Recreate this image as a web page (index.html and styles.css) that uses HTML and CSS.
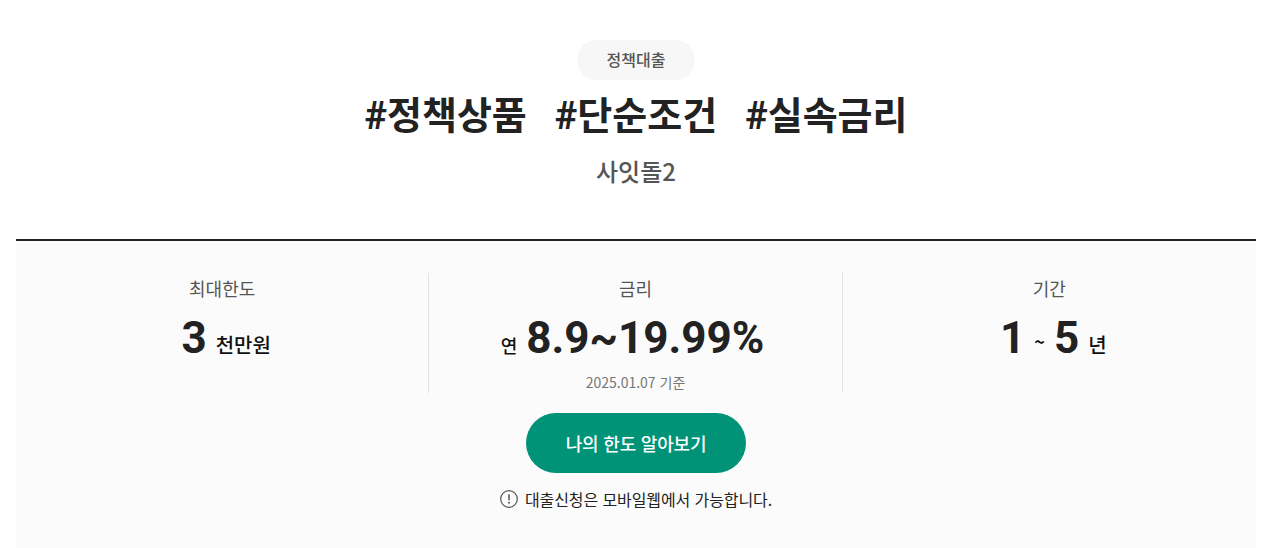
FILE: index.html
```html
<!DOCTYPE html>
<html lang="ko">
<head>
    <meta charset="UTF-8">
    <title>사잇돌2</title>
    <link rel="stylesheet" href="styles.css">
</head>
<body>
    <div class="container">
        <div class="head">
            <span class="badge">정책대출</span>
            <h1 class="tags"><span>#정책상품</span><span>#단순조건</span><span>#실속금리</span></h1>
            <p class="name">사잇돌2</p>
        </div>

        <div class="panel">
            <div class="stats">
                <div class="stat">
                    <div class="label">최대한도</div>
                    <div class="value"><strong>3</strong><em>천만원</em></div>
                </div>
                <div class="stat">
                    <div class="label">금리</div>
                    <div class="value rate"><em class="before">연</em><strong>8.9~19.99%</strong></div>
                    <div class="note">2025.01.07 기준</div>
                </div>
                <div class="stat">
                    <div class="label">기간</div>
                    <div class="value"><strong>1</strong><em class="tilde">~</em><strong>5</strong><em>년</em></div>
                </div>
            </div>

            <a class="apply" href="#">나의 한도 알아보기</a>

            <p class="notice">
                <svg class="notice-icon" width="18" height="18" viewBox="0 0 18 18">
                    <circle cx="9" cy="9" r="8.3" fill="none" stroke="#555" stroke-width="1.2"/>
                    <path d="M9 4.2v6" stroke="#555" stroke-width="1.5" fill="none"/>
                    <circle cx="9" cy="12.8" r="1" fill="#555"/>
                </svg>
                대출신청은 모바일웹에서 가능합니다.
            </p>
        </div>
    </div>
</body>
</html>
```

FILE: styles.css
```css
* {
    margin: 0;
    padding: 0;
    box-sizing: border-box;
}

body {
    font-family: "Noto Sans CJK KR", "Noto Sans", sans-serif;
    background-color: #fff;
    color: #222;
}

.container {
    padding: 40px 18px 0 16px;
    height: 548px;
    overflow: hidden;
}

.head {
    display: flex;
    flex-direction: column;
    align-items: center;
    height: 199px;
}

.badge {
    width: 118px;
    height: 40px;
    line-height: 38px;
    text-align: center;
    border-radius: 20px;
    background-color: #f7f7f7;
    color: #555;
    font-size: 16px;
    font-weight: 500;
}

.tags {
    display: flex;
    gap: 28px;
    margin-top: 9px;
    font-family: Roboto, "Noto Sans CJK KR", sans-serif;
    font-size: 38px;
    line-height: 54px;
    font-weight: 700;
}

.name {
    margin-top: 11px;
    font-family: "Noto Sans CJK KR", sans-serif;
    font-size: 24px;
    line-height: 34px;
    font-weight: 500;
    color: #555;
}

.panel {
    border-top: 2px solid #222;
    background-color: #fbfbfb;
    height: 309px;
    padding-top: 32px;
    display: flex;
    flex-direction: column;
    align-items: center;
}

.stats {
    display: grid;
    grid-template-columns: repeat(3, 1fr);
    width: 100%;
}

.stat {
    height: 120px;
    text-align: center;
    border-right: 1px solid #e2e2e2;
}

.stat:last-child {
    border-right: none;
}

.label {
    font-size: 18px;
    line-height: 30px;
    color: #555;
}

.value {
    margin-top: 8px;
    height: 54px;
    padding-left: 8px;
    display: flex;
    justify-content: center;
    align-items: baseline;
    line-height: 54px;
}

.value.rate {
    padding-left: 0;
    padding-right: 6px;
}

.value strong {
    font-family: Roboto, sans-serif;
    font-size: 44px;
    font-weight: 700;
}

.value em {
    font-style: normal;
    font-size: 20px;
    font-weight: 500;
    color: #111;
    margin-left: 9px;
}

.value em.before {
    margin-left: 0;
    margin-right: 9px;
    font-size: 18px;
}

.value em.tilde {
    margin: 0 9px;
    font-size: 18px;
    font-weight: 700;
    line-height: 40px;
    transform: translateY(-4px);
}

.note {
    margin-top: 7px;
    font-size: 14px;
    line-height: 20px;
    color: #777;
}

.apply {
    margin-top: 20px;
    width: 220px;
    height: 60px;
    line-height: 60px;
    text-align: center;
    border-radius: 30px;
    background-color: #009378;
    color: #fff;
    font-size: 18px;
    font-weight: 500;
    letter-spacing: -0.2px;
    text-decoration: none;
}

.notice {
    margin-top: 14px;
    display: flex;
    align-items: center;
    gap: 7px;
    font-size: 16px;
    line-height: 24px;
    letter-spacing: -0.1px;
    color: #222;
}
```
